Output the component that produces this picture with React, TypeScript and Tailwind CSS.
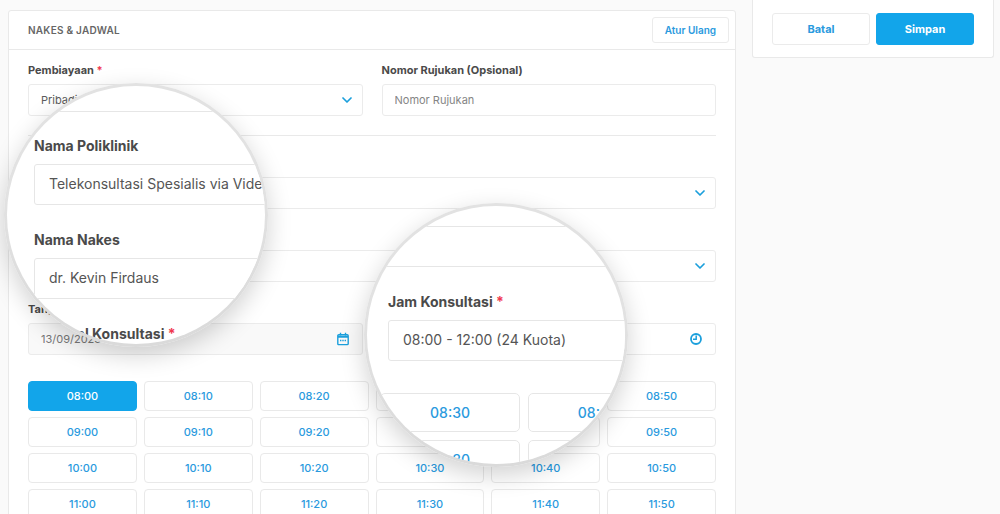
import { useState } from 'react'
import type { ReactNode } from 'react'

const hours = ['08', '09', '10', '11']
const minutes = ['00', '10', '20', '30', '40', '50']
const slots = hours.flatMap((h) => minutes.map((m) => `${h}:${m}`))

const control = 'h-8 w-full appearance-none rounded-[3px] border border-[#ebebeb] bg-white px-3 text-[11px] text-[#5c5c5c] outline-none placeholder:text-[#858585]'
const lensControl = 'h-[41px] w-[300px] shrink-0 appearance-none rounded-[3px] border border-[#e6e6e6] bg-white px-3.5 pb-0.5 text-[14px] text-[#555]'

function ChevronIcon() {
  return (
    <svg className="pointer-events-none absolute right-[11px] top-1/2 h-2 w-2.5 -translate-y-1/2" viewBox="0 0 10 8"
      fill="none" stroke="#1b9fdc" strokeWidth={1.7}>
      <path strokeLinecap="round" strokeLinejoin="round" d="M1 2l4 4 4-4" />
    </svg>
  )
}

function CalendarIcon() {
  return (
    <svg className="pointer-events-none absolute right-3.5 top-1/2 h-[13px] w-3 -translate-y-1/2" viewBox="0 0 12 13"
      fill="none" stroke="#1b9fdc" strokeWidth={1.4}>
      <rect x="0.8" y="2.2" width="10.4" height="10" rx="1" />
      <path d="M1 4.2h10" strokeWidth={2} />
      <path d="M3.5 0v3M8.5 0v3" />
      <path d="M3 8h1.4M5.3 8h1.4M7.6 8H9" strokeWidth={1.6} />
    </svg>
  )
}

function ClockIcon() {
  return (
    <svg className="pointer-events-none absolute right-3.5 top-1/2 h-3 w-3 -translate-y-1/2" viewBox="0 0 12 12"
      fill="none" stroke="#1b9fdc" strokeWidth={1.8}>
      <circle cx="6" cy="6" r="5" />
      <path strokeWidth={1.5} d="M6.2 2.6v3.6H3" />
    </svg>
  )
}

function Required() {
  return <span className="text-[#f0384f]"> *</span>
}

function Field({ id, label, required, children }: { id: string; label: string; required?: boolean; children: ReactNode }) {
  return (
    <div className="flex min-w-0 flex-1 flex-col gap-1">
      <label htmlFor={id} className="text-[11px] leading-5 font-bold text-[#4a4a4a]">
        {label}
        {required && <Required />}
      </label>
      <div className="relative">{children}</div>
    </div>
  )
}

function LensField({ id, label, value, required }: { id: string; label: string; value: string; required?: boolean }) {
  return (
    <div className="flex shrink-0 flex-col gap-[7px]">
      <label htmlFor={id} className="text-[14px] leading-[22px] font-bold whitespace-nowrap text-[#4a4a4a]">
        {label}
        {required && <Required />}
      </label>
      <select id={id} className={lensControl}>
        <option>{value}</option>
      </select>
    </div>
  )
}

function Lens({ className, children }: { className: string; children: ReactNode }) {
  return (
    <div className={`absolute size-[264px] rounded-full bg-linear-to-b from-[#e2e2e2] from-40% to-[#dadada] p-[3px] shadow-[0_8px_24px_rgba(0,0,0,0.18)] ${className}`}>
      <div className="flex size-full flex-col overflow-hidden rounded-full bg-white">{children}</div>
    </div>
  )
}

export default function App() {
  const [active, setActive] = useState('08:00')

  return (
    <div className="relative flex h-screen items-start gap-4 overflow-hidden bg-[#fafafa] pr-1.5 pl-2 font-['Inter',sans-serif]">
      <main className="mt-2.5 min-w-0 flex-1 rounded-[3px] border border-[#e9e9e9] bg-white">
        <header className="flex h-[39px] items-center justify-between border-b border-[#e9e9e9] pr-1.5 pl-[19px]">
          <h1 className="text-[10px] font-semibold tracking-wide text-[#666]">NAKES &amp; JADWAL</h1>
          <button type="button" className="h-[26px] rounded-[3px] border border-[#ebebeb] px-3 text-[10px] font-semibold text-[#2a9ade]">
            Atur Ulang
          </button>
        </header>

        <form className="px-[19px] pt-2.5" onSubmit={(e) => e.preventDefault()}>
          <div className="flex gap-[19px] border-b border-[#e9e9e9] pb-[19px]">
            <Field id="pembiayaan" label="Pembiayaan" required>
              <select id="pembiayaan" className={control}>
                <option>Pribadi</option>
              </select>
              <ChevronIcon />
            </Field>
            <Field id="rujukan" label="Nomor Rujukan (Opsional)">
              <input id="rujukan" type="text" placeholder="Nomor Rujukan" className={control} />
            </Field>
          </div>

          <div className="flex flex-col gap-[17px] pt-[17px]">
            <Field id="poliklinik" label="Nama Poliklinik">
              <select id="poliklinik" className={control}>
                <option>Telekonsultasi Spesialis via Video</option>
              </select>
              <ChevronIcon />
            </Field>
            <Field id="nakes" label="Nama Nakes">
              <select id="nakes" className={control}>
                <option>dr. Kevin Firdaus</option>
              </select>
              <ChevronIcon />
            </Field>
            <div className="flex gap-[19px]">
              <Field id="tanggal" label="Tanggal Konsultasi" required>
                <input id="tanggal" type="text" readOnly value="13/09/2023" className="h-8 w-full rounded-[3px] border border-[#ebebeb] bg-[#f9f9f9] px-3 text-[11px] text-[#777] outline-none" />
                <CalendarIcon />
              </Field>
              <Field id="jam" label="Jam Konsultasi" required>
                <select id="jam" className={control}>
                  <option>08:00 - 12:00 (24 Kuota)</option>
                </select>
                <ClockIcon />
              </Field>
            </div>
          </div>

          <div className="mt-[26px] grid grid-cols-6 gap-x-[7px] gap-y-1.5 pb-5">
            {slots.map((slot) => (
              <button key={slot} type="button" onClick={() => setActive(slot)}
                className={`h-[30px] rounded border text-[11px] font-medium ${
                  slot === active ? 'border-[#12a5ea] bg-[#12a5ea] text-white' : 'border-[#e9e9e9] bg-white text-[#2a9ade]'
                }`}>
                {slot}
              </button>
            ))}
          </div>
        </form>
      </main>

      <aside className="flex w-[242px] gap-1.5 rounded-b-[3px] border border-t-0 border-[#e9e9e9] bg-white px-[19px] pt-[13px] pb-3">
        <button type="button" className="h-8 flex-1 rounded-[3px] border border-[#ebebeb] text-[11px] font-bold text-[#2a9ade]">
          Batal
        </button>
        <button type="button" className="h-8 flex-1 rounded-[3px] border border-[#12a5ea] bg-[#12a5ea] text-[11px] font-bold text-white">
          Simpan
        </button>
      </aside>

      {/* Magnified clinic and practitioner */}
      <Lens className="top-[83px] left-1">
        <div className="h-[26px] shrink-0 border-b border-[#e6e6e6]" />
        <div className="flex flex-col gap-6 pt-[23px] pl-[27px]">
          <LensField id="lens-poliklinik" label="Nama Poliklinik" value="Telekonsultasi Spesialis via Video" />
          <LensField id="lens-nakes" label="Nama Nakes" value="dr. Kevin Firdaus" />
          <p className="text-[14px] leading-[22px] font-bold whitespace-nowrap text-[#4a4a4a]">
            Tanggal Konsultasi<Required />
          </p>
        </div>
      </Lens>

      {/* Magnified consultation hours */}
      <Lens className="top-[203px] left-[364px]">
        <div className="h-[21px] shrink-0 border-b border-[#e6e6e6]" />
        <div className="h-10 shrink-0 border-b border-[#e6e6e6]" />
        <div className="pt-6 pl-[21px]">
          <LensField id="lens-jam" label="Jam Konsultasi" value="08:00 - 12:00 (24 Kuota)" required />
        </div>
        <div className="grid shrink-0 grid-cols-[140px_140px] gap-2 pt-8 pl-[13px]">
          {['08:30', '08:40', '09:30', '09:40'].map((slot) => (
            <button key={slot} type="button" onClick={() => setActive(slot)}
              className="h-[39px] rounded-[5px] border border-[#e6e6e6] text-[14px] font-medium text-[#2a9ade]">
              {slot}
            </button>
          ))}
        </div>
      </Lens>
    </div>
  )
}
